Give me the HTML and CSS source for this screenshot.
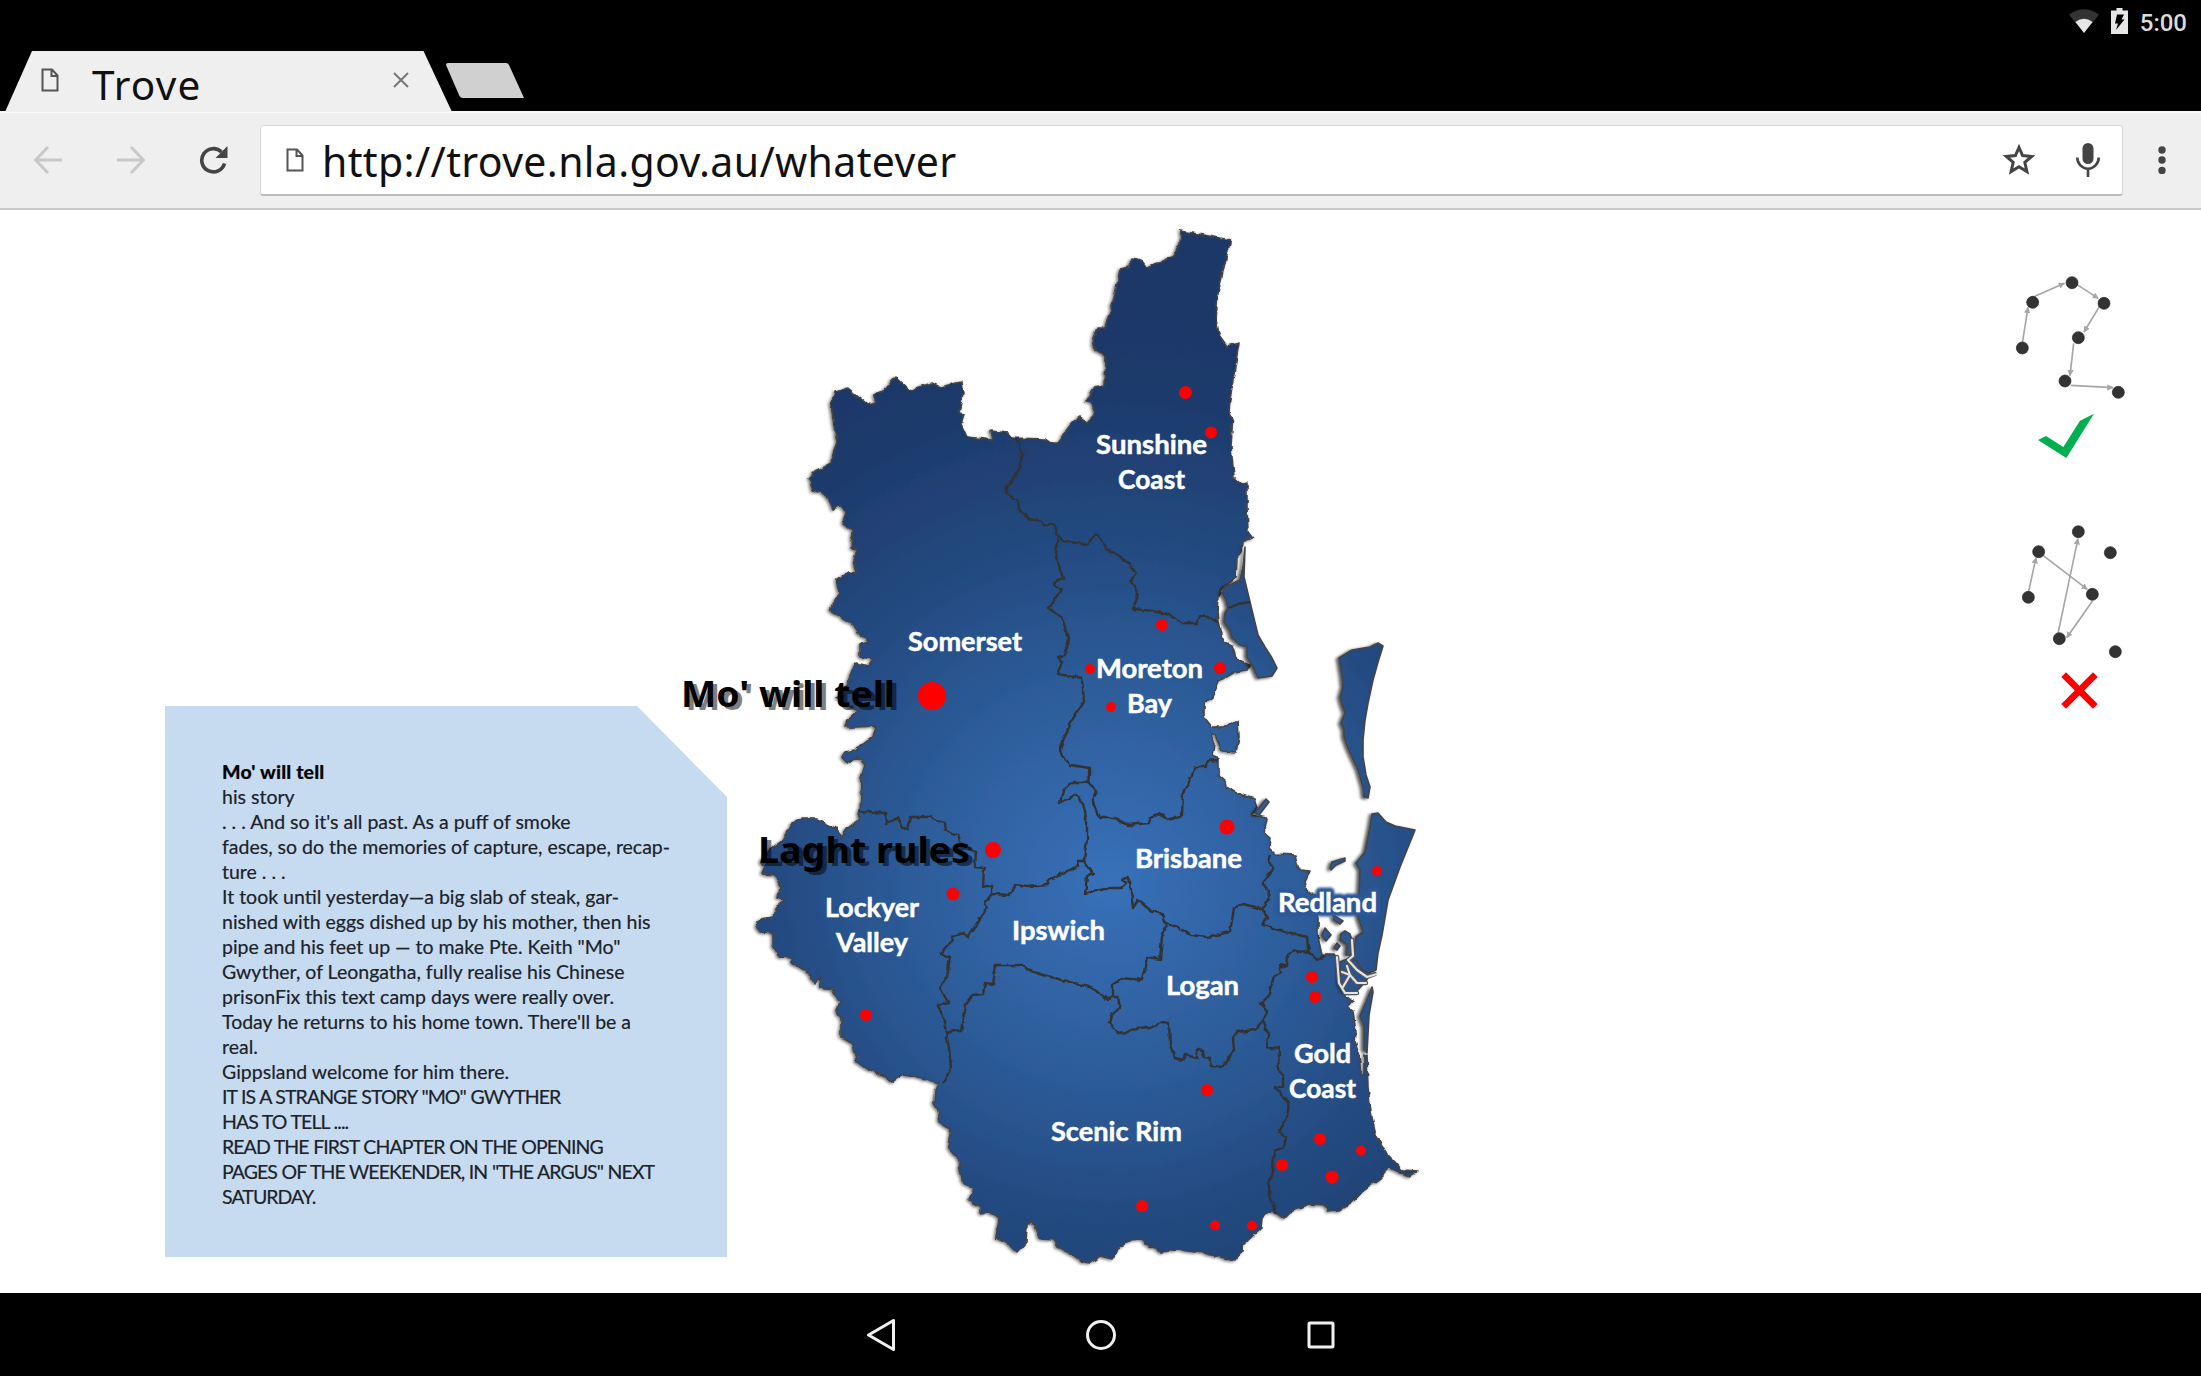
FILE: index.html
```html
<!DOCTYPE html>
<html lang="en">
<head>
<meta charset="utf-8">
<title>Trove</title>
<link rel="stylesheet" href="styles.css">
</head>
<body>
<header class="tabstrip">
  <div class="tab">
    <svg class="tab-shape" viewBox="0 0 447 61"><path d="M0 61 27 0H418.500L447 61z"/></svg>
    <svg class="doc tab-doc" viewBox="0 0 18 24"><path d="M1.500 1.500H11L16.500 7.500V22.500H1.500zM10.500 1.500V8H16.500"/></svg>
    <span class="tab-title">Trove</span>
    <svg class="tab-close" viewBox="0 0 16 16"><path d="M1 1 15 15M15 1 1 15"/></svg>
  </div>
  <svg class="new-tab" viewBox="0 0 78 35"><path d="M2 0H60Q62 0 63 2L78 35H17Q14.500 35 13.500 33L0 2Q0 0 2 0z"/></svg>
  <div class="status">
    <svg class="wifi" viewBox="0 0 30 24"><path fill="#333" d="M0 5.500Q15-5 30 5.500L15 24z"/><path fill="#e6e6e6" d="M6.500 13Q15 6.500 23.500 13L15 24z"/></svg>
    <svg class="battery" viewBox="0 0 17 26"><path fill="#e6e6e6" d="M5.500 0H11.500V2.500H17V26H0V2.500H5.500z"/><path fill="#000" d="M6 6.500H13L10.500 11.500H13.500L5 22 7 15.500H4z"/></svg>
    <span class="clock">5:00</span>
  </div>
</header>

<div class="toolbar">
  <svg class="arrow" viewBox="0 0 28 28"><path d="M28 14H2M14 1 1.500 14 14 27"/></svg>
  <svg class="arrow" viewBox="0 0 28 28"><path d="M0 14H26M14 1 26.500 14 14 27"/></svg>
  <svg class="reload" viewBox="0 0 29 30"><path fill="none" stroke="#444" stroke-width="3.600" d="M25.500 18.500A11.600 11.600 0 1 1 22.500 7"/><path fill="#444" d="M28.500 1V13H16.500z"/></svg>
  <div class="address">
    <svg class="doc" viewBox="0 0 18 24"><path d="M1.500 1.500H11L16.500 7.500V22.500H1.500zM10.500 1.500V8H16.500"/></svg>
    <span class="url">http://trove.nla.gov.au/whatever</span>
    <svg class="star" viewBox="0 0 34 33"><path d="M17 4.500 20.600 12.600 29.700 13.500 22.800 19.400 24.900 28.500 17 23.700 9.100 28.500 11.200 19.400 4.300 13.500 13.400 12.600z"/></svg>
    <svg class="mic" viewBox="0 0 24 34"><rect x="6.500" y="0" width="11" height="21" rx="5.500" fill="#444"/><path fill="none" stroke="#444" stroke-width="2.600" d="M1.300 14.500A10.700 11.200 0 0 0 22.700 14.500M12 25.500V34"/></svg>
  </div>
  <svg class="more" viewBox="0 0 8 28"><circle cx="4" cy="4" r="3.700"/><circle cx="4" cy="14" r="3.700"/><circle cx="4" cy="24.500" r="3.700"/></svg>
</div>

<main class="page">
  <article class="note">
    <h2>Mo' will tell</h2>
    <p>his story</p>
    <p>. . . And so it's all past. As a puff of smoke</p>
    <p>fades, so do the memories of capture, escape, recap-</p>
    <p>ture . . .</p>
    <p>It took until yesterday—a big slab of steak, gar-</p>
    <p>nished with eggs dished up by his mother, then his</p>
    <p>pipe and his feet up — to make Pte. Keith "Mo"</p>
    <p>Gwyther, of Leongatha, fully realise his Chinese</p>
    <p>prisonFix this text camp days were really over.</p>
    <p>Today he returns to his home town. There'll be a</p>
    <p>real.</p>
    <p>Gippsland welcome for him there.</p>
    <p class="caps">IT IS A STRANGE STORY "MO" GWYTHER</p>
    <p class="caps">HAS TO TELL ....</p>
    <p class="caps">READ THE FIRST CHAPTER ON THE OPENING</p>
    <p class="caps">PAGES OF THE WEEKENDER, IN "THE ARGUS" NEXT</p>
    <p class="caps">SATURDAY.</p>
  </article>

  <svg class="map" viewBox="740 210 700 1083">
    <defs>
      <radialGradient id="sea" gradientUnits="userSpaceOnUse" cx="1110" cy="880" r="600">
        <stop offset="0" stop-color="#3871b9"/><stop offset=".33" stop-color="#2d5c99"/>
        <stop offset=".58" stop-color="#23497f"/><stop offset=".8" stop-color="#1e3b6c"/><stop offset="1" stop-color="#1d3768"/>
      </radialGradient>
      <filter id="rough" filterUnits="userSpaceOnUse" x="700" y="200" width="760" height="1093">
        <feTurbulence type="fractalNoise" baseFrequency=".12" numOctaves="2" seed="4" result="n"/>
        <feDisplacementMap in="SourceGraphic" in2="n" scale="5" xChannelSelector="R" yChannelSelector="G" result="land"/>
        <feDropShadow in="land" dx="-1.500" dy="1" stdDeviation="1.400" flood-color="#000" flood-opacity=".55"/>
      </filter>
      <filter id="shade" filterUnits="userSpaceOnUse" x="1180" y="520" width="260" height="560">
        <feDropShadow dx="-2.500" dy="1" stdDeviation="1.500" flood-color="#000" flood-opacity=".65"/>
      </filter>
      <filter id="halo" filterUnits="userSpaceOnUse" x="1260" y="870" width="140" height="60"><feGaussianBlur stdDeviation="1"/></filter>
    </defs>

    <g filter="url(#rough)">
      <path class="land" d="M1181 231 1230.500 240 1224 267 1218 293 1216 320 1219 335 1227 346 1239 343 1235 367 1230 400 1229 413 1232.500 421 1231 447 1234 477 1242 484 1247 483 1247 507 1248 532 1252.500 538 1242 542 1241 553 1237 558 1236 578 1222 588 1218 595 1217 613 1218 623 1223 642 1232 646 1237 660 1250 666 1247 670 1235 672 1218 682 1212 697 1204 703 1204 717 1212 727 1227 727 1235 721 1238 721 1239 737 1236 752 1222 751 1218 742 1215 735 1211 735 1214 745 1212 755 1218 758 1218 775 1226 782 1227 787 1242 795 1254 799 1257 808 1251 815 1267 818 1264 833 1270 838 1269 848 1275 854 1295 855 1299 870 1310 871 1305 882 1308 893 1318 894 1318 917 1318 933 1323 955 1335 955 1337 967 1338 983 1345 995 1352 1001 1347 1007 1353 1011 1356 1033 1355 1042 1359 1055 1361 1076 1364 1075 1364 1054 1367 1055 1368 1087 1371 1113 1376 1135 1387 1154 1395 1162 1403 1171 1417 1172 1410 1176 1400 1173 1389 1169 1380 1178 1363 1190 1352 1203 1340 1210 1327 1211 1326 1206 1307 1205 1290 1212 1284 1218 1277 1213 1267 1212 1262 1217 1261 1228 1243 1245 1243 1250 1235 1261 1220 1257 1203 1253 1178 1250 1162 1252 1150 1247 1142 1239 1130 1240 1120 1247 1112 1259 1100 1256 1090 1263 1083 1262 1073 1255 1057 1247 1053 1240 1042 1239 1036 1232 1032 1221 1027 1226 1026 1242 1017 1252 1010 1245 996 1238 999 1218 989 1212 980 1213 980 1207 968 1200 974 1188 963 1185 961 1173 957 1157 948 1147 951 1128 940 1123 938 1110 934 1103 935 1090 938 1083 922 1078 902 1075 892 1082 883 1075 868 1070 857 1062 851 1043 841 1037 841 1017 836 1010 840 1003 832 989 820 987 822 977 814 984 811 975 792 963 792 958 779 957 773 945 773 933 761 932 756 923 760 919 772 917 778 905 786 901 778 898 780 887 775 875 762 874 765 867 761 862 767 852 783 840 792 823 803 819 817 819 835 828 842 837 848 828 858 820 860 810 862 783 860 778 864 765 857 757 847 763 842 757 845 752 855 750 873 737 876 726 857 727 845 727 848 720 857 712 848 705 836 697 847 683 855 663 868 666 872 659 860 657 860 644 869 642 858 633 851 623 833 613 831 608 838 597 837 580 848 572 857 573 854 560 857 549 851 548 852 530 843 524 847 512 840 505 833 509 827 496 813 490 809 478 815 472 832 463 833 453 837 442 833 420 831 403 835 391 848 388 867 404 875 402 875 395 883 391 895 377 909 390 932 383 940 387 961 382 963 393 959 413 964 414 961 424 967 437 993 440 991 431 1008 433 1012 438 1045 439 1052 444 1058 444 1063 435 1073 422 1080 417 1087 422 1095 414 1092 403 1085 402 1093 388 1105 386 1106 357 1095 350 1093 338 1097 328 1105 328 1107 320 1112 307 1118 280 1120 269 1129 267 1132 259 1142 261 1147 268 1160 262 1173 256 1180 243z"/>
      <g class="border">
        <path d="M1017 439 1022 453 1020 467 1007 487 1007 494 1017 500 1020 511 1028 518 1042 521 1045 525 1053 524 1057 535 1067 542 1088 544 1095 534 1100 537 1107 550 1115 552 1128 564 1137 573 1131 582 1139 593 1133 609 1153 611 1167 614 1182 623 1197 623 1200 616 1213 618 1218 623"/>
        <path d="M1059 538 1055 553 1063 578 1053 583 1062 590 1048 608 1062 617 1068 638 1065 655 1058 657 1063 663 1058 674 1082 678 1084 702 1070 723 1060 750 1062 757 1070 765 1090 768 1090 775 1087 782 1097 790 1093 800 1100 818 1115 818 1127 825 1149 823 1150 818 1160 814 1168 820 1182 815 1183 793 1192 775 1196 767 1205 767 1208 761 1218 760"/>
        <path d="M1087 782 1075 782 1063 790 1060 803 1075 795 1083 803 1087 822 1087 840 1084 860 1077 860 1078 866 1063 873 1050 879 1047 885 1027 887 1015 885 1010 895 992 894 992 887 983 887 984 868 975 867 976 853 960 842 958 835 945 830 944 823 930 817 910 817 907 829 903 828 898 817 887 823 886 813 860 811"/>
        <path d="M992 894 985 903 987 907 968 938 963 933 951 937 953 941 941 953 950 957 947 977 940 988 948 1002 937 1005 942 1012 946 1033 949 1048 951 1068 943 1083"/>
        <path d="M946 1033 961 1030 965 1005 972 995 983 994 985 983 993 984 996 965 1023 965 1028 970 1043 975 1067 981 1092 988 1108 1000 1112 995 1112 985 1122 978 1142 980 1147 957 1160 959 1162 937 1167 924"/>
        <path d="M1084 860 1093 873 1087 876 1085 894 1103 888 1122 888 1127 883 1122 880 1127 877 1130 883 1133 908 1138 900 1150 910 1162 914 1167 924 1178 927 1190 935 1207 937 1230 932 1234 908 1243 904 1262 909 1268 900 1269 890 1262 882 1273 868 1269 863 1271 855"/>
        <path d="M1262 909 1267 917 1263 925 1283 931 1307 937 1308 950 1317 960 1325 956M1310 953 1295 951 1287 955 1286 967 1280 965 1282 972 1274 977 1268 997 1261 1003 1267 1012 1263 1020 1255 1030 1237 1032 1233 1038 1234 1050 1222 1067 1212 1066 1210 1058 1204 1057 1203 1050 1197 1049 1197 1058 1185 1055 1183 1060 1175 1058 1170 1045 1169 1023 1163 1022 1150 1027 1137 1028 1123 1034 1117 1032 1109 1022 1112 1013 1120 1008 1118 997 1110 997"/>
        <path d="M1263 1020 1268 1033 1267 1047 1279 1049 1278 1070 1283 1075 1283 1087 1275 1087 1282 1097 1289 1103 1287 1118 1279 1132 1287 1137 1282 1148 1274 1151 1273 1170 1268 1183 1272 1203 1277 1214"/>
      </g>
    </g>

    <g filter="url(#shade)">
      <path class="land" d="M1245 547 1244 577 1250 602 1258 635 1265 647 1272 658 1277 668 1272 676 1258 678 1253 667 1247 657 1247 647 1240 645 1232 638 1230 631 1224 622 1225 613 1228 608 1226 600 1222 593 1225 587 1240 580 1243 567z"/>
      <path class="border" d="M1229 608 1238 604 1250 602"/>
      <path class="land" d="M1339 658 1352 650 1370 647 1378 643 1383 646 1378 662 1373 680 1368 703 1365 720 1363 740 1363 757 1366 775 1370 787 1368 798 1364 797 1363 787 1358 770 1352 757 1348 748 1344 737 1344 730 1341 723 1345 713 1342 705 1340 697 1343 687 1342 677z"/>
      <path class="land" d="M1372 814 1378 813 1386 822 1395 826 1415 830 1400 867 1388 900 1382 935 1378 953 1376 970 1367 974 1358 972 1353 960 1356 937 1363 932 1358 917 1360 870 1356 863 1365 852 1370 827z"/>
      <path class="land" d="M1266 799 1269 802 1259 815 1255 813zM1330 868 1332 862 1345 858 1345 861 1336 865 1331 870zM1325 928 1331 935 1326 941 1322 935zM1333 915 1343 921 1340 924 1334 920zM1345 931 1350 934 1352 940 1351 955 1346 955 1347 945 1340 940 1341 934zM1337 943 1340 946 1337 950 1334 948z"/>
      <path class="land" d="M1340 962 1347 959 1356 960 1362 970 1370 974 1366 981 1356 992 1345 992 1340 983z"/>
      <path class="land" d="M1372 987 1373 992 1369 1015 1367 1053 1364 1050 1364 1027 1360 1016 1366 1002z"/>
    </g>
    <path class="creek-bank" d="M1352 940 1353 956 1348 960 1357 970 1367 977 1375 974M1337 957 1339 983 1345 993 1357 993M1342 972 1350 975 1357 983 1366 983M1343 987 1350 975 1347 966"/>
    <path class="creek" d="M1352 940 1353 956 1348 960 1357 970 1367 977 1377 974M1337 957 1339 983 1345 993 1357 993M1342 972 1350 975 1357 983 1366 983M1343 987 1350 975 1347 966"/>

    <g class="dots">
      <circle cx="1185.500" cy="392.500" r="6.500"/><circle cx="1211" cy="432.500" r="6"/><circle cx="1162" cy="625" r="6"/>
      <circle cx="1090" cy="669" r="5"/><circle cx="1220" cy="668" r="6"/><circle cx="1111" cy="707" r="5"/>
      <circle cx="1227" cy="827" r="7.500"/><circle cx="1377" cy="871" r="5"/><circle cx="932" cy="696" r="14"/>
      <circle cx="993" cy="850" r="8"/><circle cx="953" cy="894" r="6.500"/><circle cx="866" cy="1015" r="6"/>
      <circle cx="1312" cy="977" r="6"/><circle cx="1315" cy="997" r="6"/><circle cx="1207" cy="1090" r="6"/>
      <circle cx="1320" cy="1139" r="6"/><circle cx="1361" cy="1150.500" r="5"/><circle cx="1282" cy="1165" r="6"/>
      <circle cx="1332" cy="1177" r="6.500"/><circle cx="1142" cy="1206" r="6"/><circle cx="1215" cy="1225.500" r="5"/>
      <circle cx="1252" cy="1225.500" r="5"/>
    </g>

    <text class="labels glow" filter="url(#halo)" aria-hidden="true" x="1278" y="912" textLength="99" lengthAdjust="spacingAndGlyphs">Redland</text>
    <g class="labels">
      <text x="1096" y="453.500" textLength="111" lengthAdjust="spacingAndGlyphs">Sunshine</text>
      <text x="1118" y="489" textLength="67" lengthAdjust="spacingAndGlyphs">Coast</text>
      <text x="908" y="650.500" textLength="114" lengthAdjust="spacingAndGlyphs">Somerset</text>
      <text x="1096" y="678" textLength="107" lengthAdjust="spacingAndGlyphs">Moreton</text>
      <text x="1127" y="713" textLength="45" lengthAdjust="spacingAndGlyphs">Bay</text>
      <text x="1135" y="868" textLength="107" lengthAdjust="spacingAndGlyphs">Brisbane</text>
      <text x="1278" y="912" textLength="99" lengthAdjust="spacingAndGlyphs">Redland</text>
      <text x="825" y="917" textLength="94" lengthAdjust="spacingAndGlyphs">Lockyer</text>
      <text x="836" y="952" textLength="72" lengthAdjust="spacingAndGlyphs">Valley</text>
      <text x="1012" y="940" textLength="93" lengthAdjust="spacingAndGlyphs">Ipswich</text>
      <text x="1166" y="994.500" textLength="73" lengthAdjust="spacingAndGlyphs">Logan</text>
      <text x="1294" y="1063" textLength="57" lengthAdjust="spacingAndGlyphs">Gold</text>
      <text x="1289" y="1098" textLength="67" lengthAdjust="spacingAndGlyphs">Coast</text>
      <text x="1051" y="1140.500" textLength="131" lengthAdjust="spacingAndGlyphs">Scenic Rim</text>
    </g>
    <g class="stories">
      <text x="681" y="706.500" textLength="214" lengthAdjust="spacingAndGlyphs">Mo' will tell</text>
      <text x="758" y="862.500" textLength="212" lengthAdjust="spacingAndGlyphs">Laght rules</text>
    </g>
  </svg>

  <svg class="gestures" viewBox="0 0 540 1440">
    <defs><marker id="tip" viewBox="0 0 10 10" refX="9" refY="5" markerWidth="19" markerHeight="19" markerUnits="userSpaceOnUse" orient="auto"><path d="M0 0 10 5 0 10z" fill="#aaa5a5"/></marker></defs>
    <g class="links">
      <path d="M127 280 144 172"/><path d="M158 142 253 100"/><path d="M290 103 355 145"/><path d="M358 170 312 246"/><path d="M281 280 270 377"/><path d="M272 406 399 413"/>
      <path d="M145 1028 168 923"/><path d="M190 917 322 1018"/><path d="M338 1052 260 1163"/><path d="M234 1150 294 866"/>
    </g>
    <g class="nodes">
      <circle cx="127" cy="294" r="18"/><circle cx="158" cy="157" r="18"/><circle cx="276" cy="98" r="18"/><circle cx="372" cy="160" r="18"/><circle cx="295" cy="263" r="18"/><circle cx="255" cy="393" r="18"/><circle cx="415" cy="427" r="18"/>
      <circle cx="145" cy="1042" r="18"/><circle cx="176" cy="905" r="18"/><circle cx="295" cy="845" r="18"/><circle cx="391" cy="908" r="18"/><circle cx="337" cy="1033" r="18"/><circle cx="238" cy="1166" r="18"/><circle cx="406" cy="1205" r="18"/>
    </g>
    <path fill="#00b050" d="M174 570 198 558 250 591 300 512 342 491 259 624z"/>
    <path fill="none" stroke="#f00" stroke-width="20" d="M251 1274 346 1369M346 1274 251 1369"/>
  </svg>
</main>

<nav class="navbar">
  <svg viewBox="0 0 32 32"><path d="M28.500 1.500V30.500L3.500 16z"/></svg>
  <svg viewBox="0 0 32 32"><circle cx="16" cy="16" r="13.500"/></svg>
  <svg viewBox="0 0 32 32"><rect x="4" y="4" width="24" height="24" rx="1"/></svg>
</nav>
</body>
</html>
```
FILE: styles.css
```css
* { box-sizing: border-box; }
body {
  margin: 0;
  width: 2201px;
  height: 1376px;
  display: flex;
  flex-direction: column;
  background: #fff;
  overflow: hidden;
}
svg { display: block; flex: none; }

.tabstrip {
  height: 111px;
  background: #000;
  display: flex;
  align-items: flex-start;
  padding-left: 5px;
}
.tab {
  position: relative;
  width: 447px;
  height: 61px;
  margin-top: 51px;
  display: flex;
  align-items: flex-start;
  padding-left: 36px;
}
.tab-shape { position: absolute; left: 0; top: 0; width: 447px; height: 61px; fill: #efefef; }
.doc { width: 18px; height: 24px; fill: none; stroke: #555; stroke-width: 2; }
.tab-doc { position: relative; margin-top: 17px; }
.tab-title {
  position: relative;
  width: 299px;
  margin: 5px 0 0 33px;
  font: 40.500px/58px "Noto Sans", "Open Sans", sans-serif;
  letter-spacing: 1.200px;
  color: #111;
}
.tab-close { position: relative; width: 16px; height: 16px; margin: 21px 0 0 2px; fill: none; stroke: #777; stroke-width: 2; }
.new-tab { width: 78px; height: 35px; margin: 63px 0 0 -6px; position: relative; fill: #d0d0d0; }
.status { margin-left: auto; display: flex; padding: 8px 14px 0 0; }
.wifi { width: 30px; height: 24px; margin-top: 1px; }
.battery { width: 17px; height: 26px; margin-left: 12px; }
.clock { margin-left: 12px; font: 500 24px/30px Roboto, sans-serif; color: #dcdcdc; }

.toolbar {
  height: 99px;
  background: #efefef;
  border-top: 2px solid #f8f8f8;
  border-bottom: 2px solid #c8c8c8;
  display: flex;
  align-items: center;
  padding: 0 0 1px 34px;
}
.arrow { width: 28px; height: 28px; margin-right: 55px; fill: none; stroke: #c8c8c8; stroke-width: 3; }
.reload { width: 29px; height: 30px; margin-left: -1px; }
.address {
  width: 1863px;
  height: 71px;
  margin-left: 32px;
  display: flex;
  align-items: center;
  padding: 0 22px 0 25px;
  background: #fff;
  border: 1px solid #d8d8d8;
  border-bottom: 2px solid #bbb;
  border-radius: 3px;
}
.url {
  flex: 1;
  margin-left: 18px;
  padding-top: 2px;
  font: 41px/60px "Noto Sans", "Open Sans", sans-serif;
  letter-spacing: .36px;
  color: #111;
  white-space: nowrap;
}
.star { width: 34px; height: 33px; fill: none; stroke: #444; stroke-width: 3; }
.mic { width: 24px; height: 34px; margin-left: 40px; }
.more { width: 8px; height: 28px; margin-left: 35px; fill: #444; }

.page {
  height: 1083px;
  display: flex;
  align-items: flex-start;
}
.note {
  width: 562px;
  height: 551px;
  margin: 496px 13px 0 165px;
  padding: 53px 0 0 57px;
  background: #c6dbf0;
  clip-path: polygon(0 0, 472px 0, 100% 91px, 100% 100%, 0 100%);
  font: 19.500px/25px Lato, sans-serif;
  color: #1c2229;
  -webkit-text-stroke: .2px #1c2229;
  white-space: nowrap;
}
.note h2, .note p { margin: 0; font-size: inherit; line-height: 25px; }
.note h2 { color: #000; font-weight: 900; letter-spacing: .15px; }
.note .caps { letter-spacing: -.93px; word-spacing: .5px; }

.map { width: 700px; height: 1083px; overflow: visible; }
.land { fill: url(#sea); stroke: #444; stroke-width: 1.600; stroke-linejoin: round; }
.border { fill: none; stroke: #333; stroke-width: 2.400; stroke-linejoin: round; }
.creek-bank, .creek { fill: none; stroke-linejoin: round; stroke-linecap: round; }
.creek-bank { stroke: #555; stroke-width: 4.500; }
.creek { stroke: #e4e4e4; stroke-width: 2.200; }
.dots { fill: #f00; }
.labels { font: 700 27.500px Lato, sans-serif; fill: #fff; stroke: #fff; stroke-width: .5; }
.labels.glow { fill: #2a5899; stroke: #2a5899; stroke-width: 9; stroke-linejoin: round; }
.stories { font: 700 36px "Noto Sans", "Open Sans", sans-serif; fill: #000; text-shadow: 4px 3px 0 rgba(0, 0, 0, .5); }

.gestures { width: 180px; height: 480px; margin: 40px 0 0 540px; }
.links { fill: none; stroke: #aaa5a5; stroke-width: 5; }
.links path { marker-end: url(#tip); }
.nodes { fill: #333; stroke: #222; stroke-width: 2; }

.navbar {
  height: 83px;
  background: #000;
  display: flex;
  justify-content: center;
  align-items: center;
  gap: 188px;
}
.navbar svg { width: 32px; height: 32px; fill: none; stroke: #f0f0f0; stroke-width: 3; stroke-linejoin: round; }
```
